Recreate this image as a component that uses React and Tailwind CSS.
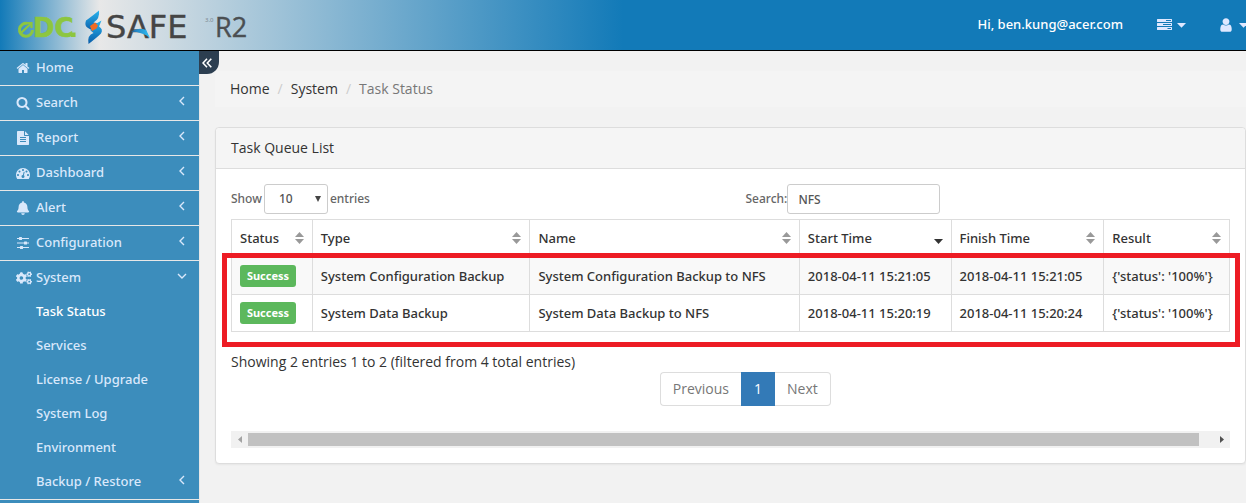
import { FaBell, FaCogs } from 'react-icons/fa';

const SOLID = {
  home: 'M1472 992v480q0 26-19 45t-45 19h-384v-384h-256v384h-384q-26 0-45-19t-19-45v-480q0-1 .5-3t.5-3l575-474 575 474q1 2 1 6zm223-69l-62 74q-8 9-21 11h-3q-13 0-21-7l-692-577-692 577q-12 8-24 7-13-2-21-11l-62-74q-8-10-7-23.5t11-21.5l719-599q32-26 76-26t76 26l244 204v-195q0-14 9-23t23-9h192q14 0 23 9t9 23v408l219 182q10 8 11 21.5t-7 23.5z',
  search: 'M1216 832q0-185-131.5-316.5t-316.5-131.5-316.5 131.5-131.5 316.5 131.5 316.5 316.5 131.5 316.5-131.5 131.5-316.5zm512 832q0 52-38 90t-90 38q-54 0-90-38l-343-342q-179 124-399 124-143 0-273.5-55.5t-225-150-150-225-55.5-273.5 55.5-273.5 150-225 225-150 273.5-55.5 273.5 55.5 225 150 150 225 55.5 273.5q0 220-124 399l343 343q37 37 37 90z',
  file: 'M1596 476q14 14 28 36h-472v-472q22 14 36 28zm-476 164h544v1056q0 40-28 68t-68 28h-1344q-40 0-68-28t-28-68v-1600q0-40 28-68t68-28h800v544q0 40 28 68t68 28zm160 736v-64q0-14-9-23t-23-9h-704q-14 0-23 9t-9 23v64q0 14 9 23t23 9h704q14 0 23-9t9-23zm0-256v-64q0-14-9-23t-23-9h-704q-14 0-23 9t-9 23v64q0 14 9 23t23 9h704q14 0 23-9t9-23zm0-256v-64q0-14-9-23t-23-9h-704q-14 0-23 9t-9 23v64q0 14 9 23t23 9h704q14 0 23-9t9-23z',
  gauge: 'M384 1152q0-53-37.5-90.5t-90.5-37.5-90.5 37.5-37.5 90.5 37.5 90.5 90.5 37.5 90.5-37.5 37.5-90.5zm192-448q0-53-37.5-90.5t-90.5-37.5-90.5 37.5-37.5 90.5 37.5 90.5 90.5 37.5 90.5-37.5 37.5-90.5zm428 481l101-382q6-26-7.5-48.5t-38.5-29.5-48 6.5-30 39.5l-101 382q-60 5-107 43.5t-63 98.5q-20 77 20 146t117 89 146-20 89-117q16-60-6-117t-72-91zm660-33q0-53-37.5-90.5t-90.5-37.5-90.5 37.5-37.5 90.5 37.5 90.5 90.5 37.5 90.5-37.5 37.5-90.5zm-640-640q0-53-37.5-90.5t-90.5-37.5-90.5 37.5-37.5 90.5 37.5 90.5 90.5 37.5 90.5-37.5 37.5-90.5zm448 192q0-53-37.5-90.5t-90.5-37.5-90.5 37.5-37.5 90.5 37.5 90.5 90.5 37.5 90.5-37.5 37.5-90.5zm320 448q0 261-141 483-19 29-54 29h-1402q-35 0-54-29-141-221-141-483 0-182 71-348t191-286 286-191 348-71 348 71 286 191 191 286 71 348z',
  user: 'M1536 1399q0 109-62.5 187t-150.5 78h-854q-88 0-150.5-78t-62.5-187q0-85 8.5-160.5t31.5-152 58.5-131 94-89 134.5-34.5q131 128 313 128t313-128q76 0 134.5 34.5t94 89 58.5 131 31.5 152 8.500 160.5zm-256-887q0 159-112.5 271.5t-271.5 112.5-271.5-112.5-112.5-271.5 112.5-271.5 271.5-112.5 271.5 112.5 112.5 271.5z',
};

function Solid({ name, className }) {
  return (
    <svg viewBox="0 0 1792 1792" className={className} fill="currentColor" aria-hidden="true">
      <path d={SOLID[name]} />
    </svg>
  );
}

function Sliders() {
  return (
    <svg viewBox="0 0 14 14" className="h-3.5 w-3.5" fill="currentColor" aria-hidden="true">
      <path d="M1 2h12v1H1zM1 6.500h12v1H1zM1 11h12v1H1z" />
      <rect x="3" y="1" width="3" height="3" rx=".5" />
      <rect x="8" y="5.500" width="3" height="3" rx=".5" />
      <rect x="4" y="10" width="3" height="3" rx=".5" />
    </svg>
  );
}

function TasksIcon() {
  return (
    <svg viewBox="0 0 15 12" className="h-3 w-[15px]" fill="currentColor" fillRule="evenodd" aria-hidden="true">
      <path d="M.5 0h14q.5 0 .5.5v2q0 .5-.5.5H.5Q0 3 0 2.500v-2Q0 0 .5 0zM9 1v1h5V1z" />
      <path d="M.5 4h14q.5 0 .5.5v2q0 .5-.5.5H.5Q0 7 0 6.500v-2Q0 4 .5 4zM6 5v1h8V5z" />
      <path d="M.5 8h14q.5 0 .5.5v2q0 .5-.5.5H.5Q0 11 0 10.500v-2Q0 8 .5 8zM10.500 9v1H14V9z" />
    </svg>
  );
}

function Caret() {
  return (
    <svg viewBox="0 0 9 5" className="h-[5px] w-[9px] shrink-0" fill="currentColor" aria-hidden="true">
      <path d="M0 0h9L4.500 4.800z" />
    </svg>
  );
}

function Angle({ open }) {
  return (
    <svg viewBox="0 0 10 10" className="mb-1 h-2.5 w-2.5" fill="none" stroke="currentColor" strokeWidth="1.400" aria-hidden="true">
      <path d={open ? 'M1 3l4 4 4-4' : 'M7 1L3 5l4 4'} />
    </svg>
  );
}

function Logo() {
  return (
    <svg viewBox="0 0 240 50" className="h-[50px] w-60" role="img" aria-label="eDC SAFE 3.0 R2">
      <defs>
        <linearGradient id="bolt" x1="0" y1="0" x2="0" y2="1">
          <stop offset="0" stopColor="#29b4ee" />
          <stop offset="1" stopColor="#0a5ca8" />
        </linearGradient>
        <linearGradient id="swoosh" x1="0" y1="0" x2="1" y2="0">
          <stop offset="0" stopColor="#1f6fb5" />
          <stop offset="1" stopColor="#2fc0f3" />
        </linearGradient>
      </defs>
      <path d="M13.500 23.500A6.500 6.500 0 1 0 18.500 30" fill="none" stroke="#8dc63f" strokeWidth="3" />
      <path d="M7.500 32.500L17 23.500M12 23h5.500v5" fill="none" stroke="#8dc63f" strokeWidth="2.200" />
      <text x="19" y="37" fill="#8dc63f" stroke="#8dc63f" strokeWidth=".6" fontFamily="DejaVu Sans" fontWeight="700" fontSize="26">DC</text>
      <rect x="57" y="32.500" width="4.500" height="4.500" fill="#8dc63f" />
      <path d="M85 10.500Q77 17 72 20.500Q70 26 74 28L80 31.500L84 23.500L79.500 22.500Q86 19 85 10.500z" fill="url(#bolt)" />
      <path d="M87.500 20.500L79 25.500L76.500 30.500L79.500 33Q73 35 74.500 44Q83.500 37 87 33.500Q89.500 29 85 26.500z" fill="url(#bolt)" />
      <path d="M76 26L81 22.500L84 25.500L82.500 28.500L78 31z" fill="#f26a21" />
      <text x="92" y="38" fill="#454545" stroke="#454545" strokeWidth=".4" fontFamily="DejaVu Sans" fontSize="32">SAFE</text>
      <path d="M117 31.500Q125 27 132 30L136 38Q129 32 117 31.500z" fill="url(#swoosh)" />
      <text x="191" y="22" fill="#7d8790" fontFamily="Noto Sans" fontSize="6">3.0</text>
      <text x="201" y="37" fill="#4b4f52" stroke="#4b4f52" strokeWidth=".4" fontFamily="Open Sans" fontSize="27">R2</text>
    </svg>
  );
}

const ICON = 'h-3.5 w-3.5';
const MENU = [
  { label: 'Home', icon: <Solid name="home" className={ICON} />, leaf: true },
  { label: 'Search', icon: <Solid name="search" className={ICON} /> },
  { label: 'Report', icon: <Solid name="file" className={ICON} /> },
  { label: 'Dashboard', icon: <Solid name="gauge" className={ICON} /> },
  { label: 'Alert', icon: <FaBell className={ICON} /> },
  { label: 'Configuration', icon: <Sliders /> },
  {
    label: 'System',
    icon: <FaCogs className="h-4 w-4 shrink-0" />,
    children: ['Task Status', 'Services', 'License / Upgrade', 'System Log', 'Environment', 'Backup / Restore'],
  },
];

function Sidebar() {
  return (
    <nav className="relative w-[200px] shrink-0 border-r border-[#e7e7e7] bg-[#3c8dbc] text-[13px] font-medium text-[#d9e8fb]">
      <ul>
        {MENU.map((item) => (
          <li key={item.label} className="border-b border-[#e7e7e7]">
            <a href="#" className="flex h-[34px] items-center pr-3 pl-4">
              <span className="flex w-5 items-center">{item.icon}</span>
              <span className="flex-1">{item.label}</span>
              {!item.leaf && <Angle open={!!item.children} />}
            </a>
            {item.children && (
              <ul>
                {item.children.map((child) => (
                  <li key={child}>
                    <a
                      href="#"
                      className={`flex h-[34px] items-center pr-3 pl-9 ${child === 'Task Status' ? 'text-white' : ''}`}
                    >
                      <span className="flex-1">{child}</span>
                      {child === 'Backup / Restore' && <Angle />}
                    </a>
                  </li>
                ))}
              </ul>
            )}
          </li>
        ))}
      </ul>
      <button
        aria-label="Collapse menu"
        className="absolute top-0 left-full flex h-[23px] w-5 items-center justify-center rounded-br-[12px] bg-[#2c3e50] pr-1 text-white"
      >
        <svg viewBox="0 0 10 10" className="h-2.5 w-2.5" fill="none" stroke="currentColor" strokeWidth="1.600" aria-hidden="true">
          <path d="M5 .7L1 5l4 4.300M9.300 .7L5.300 5l4 4.300" />
        </svg>
      </button>
    </nav>
  );
}

const COLUMNS = [
  { label: 'Status', width: 'w-[8.1%]' },
  { label: 'Type', width: 'w-[21.8%]' },
  { label: 'Name', width: 'w-[27%]' },
  { label: 'Start Time', width: 'w-[15.2%]', sorted: true },
  { label: 'Finish Time', width: 'w-[15.3%]' },
  { label: 'Result', width: 'w-[12.6%]' },
];
const ROWS = [
  ['System Configuration Backup', 'System Configuration Backup to NFS', '2018-04-11 15:21:05', '2018-04-11 15:21:05', "{'status': '100%'}"],
  ['System Data Backup', 'System Data Backup to NFS', '2018-04-11 15:20:19', '2018-04-11 15:20:24', "{'status': '100%'}"],
];

function SortIcon({ sorted }) {
  return (
    <svg viewBox="0 0 9 12" className={sorted ? 'h-3 w-[9px] text-[#333]' : 'h-3 w-[9px] text-[#999]'} fill="currentColor" aria-hidden="true">
      {!sorted && <path d="M0 5L4.500 0 9 5z" />}
      <path d="M0 7h9l-4.500 5z" />
    </svg>
  );
}

function TaskTable() {
  return (
    <div className="relative mt-[5px]">
      <table className="w-full table-fixed border-collapse text-[13px] leading-5 font-medium text-[#333]">
        <thead>
          <tr className="h-[38px]">
            {COLUMNS.map((c) => (
              <th key={c.label} className={`border border-[#ddd] px-2 pb-0.5 text-left font-medium ${c.width}`}>
                <button className="flex w-full items-center justify-between">
                  {c.label}
                  <SortIcon sorted={c.sorted} />
                </button>
              </th>
            ))}
          </tr>
        </thead>
        <tbody>
          {ROWS.map((row) => (
            <tr key={row[0]} className="h-[37px] odd:bg-[#f9f9f9]">
              <td className="border border-[#ddd] px-2">
                <span className="flex h-[22px] w-14 items-center justify-center rounded-[3px] bg-[#5cb85c] text-[11px] font-bold text-white">
                  Success
                </span>
              </td>
              {row.map((cell, i) => (
                <td key={i} className="border border-[#ddd] px-2 whitespace-nowrap">{cell}</td>
              ))}
            </tr>
          ))}
        </tbody>
      </table>
      <div className="pointer-events-none absolute top-[34px] -right-2.5 -bottom-[15px] -left-[9px] border-[5px] border-[#ed1c24]" />
    </div>
  );
}

function Scrollbar() {
  return (
    <div className="mt-[25px] flex h-[17px] items-center bg-[#f1f1f1]">
      <button aria-label="Scroll left" className="flex h-full w-[17px] items-center justify-center text-[#a3a3a3]">
        <svg viewBox="0 0 4 7" className="h-[7px] w-1" fill="currentColor"><path d="M4 0v7L0 3.500z" /></svg>
      </button>
      <div className="h-[13px] flex-1">
        <div className="h-full w-[98.6%] bg-[#c1c1c1]" />
      </div>
      <button aria-label="Scroll right" className="flex h-full w-[17px] items-center justify-center text-[#505050]">
        <svg viewBox="0 0 4 7" className="h-[7px] w-1" fill="currentColor"><path d="M0 0v7l4-3.500z" /></svg>
      </button>
    </div>
  );
}

export default function App() {
  return (
    <div className="flex h-screen flex-col overflow-hidden bg-[#f2f2f2] font-['Noto_Sans',sans-serif] text-[#333]">
      <header className="flex h-[51px] shrink-0 items-center border-b border-black bg-linear-to-r/srgb from-[#127ab8] via-[#e8e8e8] via-8% to-[#127ab8] to-50% pl-3.5">
        <a href="#"><Logo /></a>
        <span className="ml-auto text-[13px] font-medium text-white">Hi, ben.kung@acer.com</span>
        <button aria-label="Tasks" className="ml-[34px] flex items-center gap-[5px] text-[#dfe8ff]">
          <TasksIcon />
          <Caret />
        </button>
        <button aria-label="Account" className="-mr-0.5 ml-8 flex items-center gap-[5px] text-[#dfe8ff]">
          <Solid name="user" className="h-4 w-4" />
          <Caret />
        </button>
      </header>
      <div className="flex min-h-0 flex-1">
        <Sidebar />
        <main className="min-w-0 flex-1 pt-5 pl-[15px]">
          <ol className="flex bg-[#f4f4f4] px-[15px] py-2 font-['Open_Sans',sans-serif] text-sm leading-5">
            <li><a href="#">Home</a></li>
            <li className="px-2 text-[#ccc]">/</li>
            <li><a href="#">System</a></li>
            <li className="px-2 text-[#ccc]">/</li>
            <li className="text-[#777]">Task Status</li>
          </ol>
          <section className="mt-5 rounded border border-[#ddd] bg-white shadow-xs">
            <h1 className="rounded-t border-b border-[#ddd] bg-[#f5f5f5] px-[15px] py-2.5 font-['Open_Sans',sans-serif] text-sm leading-5">
              Task Queue List
            </h1>
            <div className="p-[15px]">
              <div className="grid grid-cols-2 text-xs font-medium text-[#666]">
                <label className="flex items-center gap-0.5">
                  Show
                  <span className="relative flex items-center">
                    <select className="h-[30px] w-16 appearance-none rounded-[3px] border border-[#ccc] bg-white pl-3.5 text-[#555]">
                      <option>10</option>
                    </select>
                    <svg viewBox="0 0 6 6" className="pointer-events-none absolute right-[7px] h-1.5 w-1.5 fill-[#444]">
                      <path d="M0 0h6L3 6z" />
                    </svg>
                  </span>
                  entries
                </label>
                <label className="flex items-center pl-[15px]">
                  Search:
                  <input
                    type="text"
                    defaultValue="NFS"
                    className="h-[30px] w-[153px] rounded-[3px] border border-[#ccc] bg-white px-2.5 text-[#555]"
                  />
                </label>
              </div>
              <TaskTable />
              <div className="mt-5 font-['Open_Sans',sans-serif] text-sm leading-5">
                <p>Showing 2 entries 1 to 2 (filtered from 4 total entries)</p>
                <div className="-mx-[15px] grid grid-cols-12">
                  <nav aria-label="Pages" className="col-span-7 col-start-6 flex px-[15px] text-[#777]">
                    <button className="rounded-l border border-r-0 border-[#ddd] px-3 py-1.5">Previous</button>
                    <button className="border border-[#337ab7] bg-[#337ab7] px-3 py-1.5 text-white">1</button>
                    <button className="rounded-r border border-l-0 border-[#ddd] px-3 py-1.5">Next</button>
                  </nav>
                </div>
              </div>
              <Scrollbar />
            </div>
          </section>
        </main>
      </div>
    </div>
  );
}
